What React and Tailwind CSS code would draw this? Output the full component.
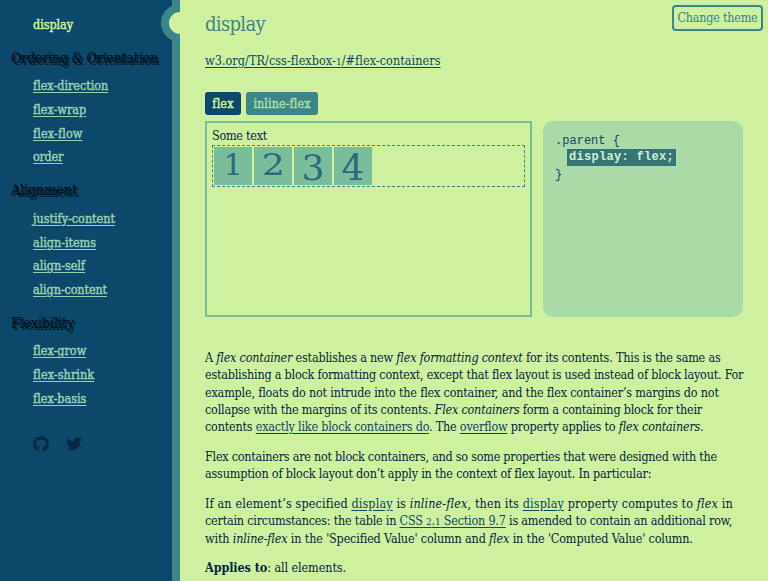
import { useLayoutEffect, useRef, useState } from 'react';
import { FaGithub, FaTwitter } from 'react-icons/fa';

// One line of text, tracked so that it fills the given measure.
function Fit({ w, className = '', children }) {
  const ref = useRef(null);
  const [spacing, setSpacing] = useState(0);
  useLayoutEffect(() => {
    const el = ref.current;
    setSpacing((w - el.getBoundingClientRect().width) / el.textContent.length);
  }, [w]);
  return (
    <span ref={ref} className={`inline-block whitespace-nowrap ${className}`} style={{ letterSpacing: spacing }}>
      {children}
    </span>
  );
}

const groups = [
  { title: 'Ordering & Orientation', w: 147, items: [['flex-direction', 75], ['flex-wrap', 53], ['flex-flow', 49], ['order', 30]] },
  { title: 'Alignment', w: 66, items: [['justify-content', 82], ['align-items', 63], ['align-self', 52], ['align-content', 74]] },
  { title: 'Flexibility', w: 63, items: [['flex-grow', 53], ['flex-shrink', 61], ['flex-basis', 53]] },
];

function Sidebar() {
  return (
    <nav className="relative flex h-full w-[180px] shrink-0 overflow-hidden bg-[#0b486b]">
      <div className="w-[172px] shrink-0 pt-[12.5px]">
        <div className="flex h-6 items-center pl-[33px] text-[#cff09e] [-webkit-text-stroke:0.45px]">
          <Fit w={40}>display</Fit>
        </div>
        {groups.map((g) => (
          <div key={g.title} className="pt-[8px]">
            <div className="mb-[1.7px] flex h-[28px] items-center pl-[11px] text-[14px] text-[#020d16] [text-shadow:2px_2px_0_#031a28]">
              <Fit w={g.w}>{g.title}</Fit>
            </div>
            {g.items.map(([t, w]) => (
              <a key={t} className="flex h-[23.7px] items-center pl-[33px] text-[#95cfb0] [-webkit-text-stroke:0.45px]">
                <Fit w={w} className="underline underline-offset-2">{t}</Fit>
              </a>
            ))}
          </div>
        ))}
        <div className="flex gap-[17px] pl-[33px] pt-[26px] text-[#062a40]">
          <FaGithub size={16} />
          <FaTwitter size={16} />
        </div>
      </div>
      <div className="w-2 shrink-0 bg-[#3b8686]" />
      <div className="absolute -right-[19px] top-[4px] size-[38px] rounded-full border-8 border-[#3b8686] bg-[#cff09e]" />
    </nav>
  );
}

const A = ({ children }) => <a className="text-[#0b486b] underline underline-offset-2">{children}</a>;
const Low = ({ children }) => <span className="text-[0.8em]">{children}</span>;

const paragraphs = [
  [
    [515, <>A <i>flex container</i> establishes a new <i>flex formatting context</i> for its contents. This is the same as</>],
    [538, <>establishing a block formatting context, except that flex layout is used instead of block layout. For</>],
    [513, <>example, floats do not intrude into the flex container, and the flex container’s margins do not</>],
    [497, <>collapse with the margins of its contents. <i>Flex containers</i> form a containing block for their</>],
    [498, <>contents <A>exactly like block containers do</A>. The <A>overflow</A> property applies to <i>flex containers</i>.</>],
  ],
  [
    [512, <>Flex containers are not block containers, and so some properties that were designed with the</>],
    [446, <>assumption of block layout don’t apply in the context of flex layout. In particular:</>],
  ],
  [
    [527, <>If an element’s specified <A>display</A> is <i>inline-flex</i>, then its <A>display</A> property computes to <i>flex</i> in</>],
    [527, <>certain circumstances: the table in <A>CSS <Low>2</Low>.<Low>1</Low> Section 9.7</A> is amended to contain an additional row,</>],
    [487, <>with <i>inline-flex</i> in the 'Specified Value' column and <i>flex</i> in the 'Computed Value' column.</>],
  ],
  [[141, <><b>Applies to</b>: all elements.</>]],
];

const digits = [
  ['1', 'text-[29px] scale-x-105 -mt-[1px]'],
  ['2', 'text-[29px] scale-x-125 -mt-[1px]'],
  ['3', 'text-[36px] mt-[3px]'],
  ['4', 'text-[36px] mt-[3px]'],
];

function Demo() {
  return (
    <div className="flex gap-[11px]">
      <div className="h-[196px] w-[327px] border-2 border-[#79bd9a] px-[5px] pt-[4px]">
        <div className="mb-px flex h-[17px] items-center text-[#05293f]"><Fit w={55}>Some text</Fit></div>
        <div className="flex h-[42px] gap-[2px] border border-dashed border-[#3b8686] p-px">
          {digits.map(([d, c]) => (
            <div key={d} className="flex h-[38px] w-[38px] items-center justify-center bg-[#79bd9a] font-['DejaVu_Serif',serif] leading-none text-[#296a7d]">
              <span className={c}>{d}</span>
            </div>
          ))}
        </div>
      </div>
      <pre className="h-[196px] w-[200px] rounded-[10px] bg-[#a8dba8] px-3 pt-[11px] font-['Liberation_Mono',monospace] text-[12px] leading-[17px] text-[#0b486b]">
        <div className="h-[17px] pt-px"><Fit w={65}>{'.parent {'}</Fit></div>
        <div className="ml-[12px] h-[17px] w-[109px] bg-[#357576] pl-[2px] font-bold text-[#cff0d0]"><Fit w={105}>display: flex;</Fit></div>
        <div className="h-[17px] pt-px">{'}'}</div>
      </pre>
    </div>
  );
}

export default function App() {
  return (
    <div className="flex h-[581px] w-[768px] overflow-hidden bg-[#cff09e] font-['DejaVu_Serif_Condensed','DejaVu_Serif',serif] text-[12.5px] leading-[17.3px] text-[#05293f]">
      <Sidebar />
      <main className="flex-1 pl-[25px]">
        <header className="flex h-[48px] items-start justify-between pr-[5px] pt-[5px]">
          <h1 className="pt-[6px] text-[20px] leading-[26px] text-[#3b8686]"><Fit w={60}>display</Fit></h1>
          <button className="flex h-[26px] w-[91px] items-center justify-center rounded-[4px] border-2 border-[#3b8686] text-[#3b8686]">
            <Fit w={80}>Change theme</Fit>
          </button>
        </header>
        <div className="flex h-[26px] items-center">
          <A><Fit w={235} className="underline underline-offset-2">w3.org/TR/css-flexbox-<Low>1</Low>/#flex-containers</Fit></A>
        </div>
        <div className="mb-[6px] mt-[18px] flex gap-[5px] [-webkit-text-stroke:0.45px]">
          <div className="flex h-[23px] w-[36px] items-center justify-center rounded-[3px] bg-[#0b486b] text-[#cff09e]"><Fit w={21}>flex</Fit></div>
          <div className="flex h-[23px] w-[72px] items-center justify-center rounded-[3px] bg-[#3b8686] text-[#a8dba8]"><Fit w={57}>inline-flex</Fit></div>
        </div>
        <Demo />
        <article className="flex flex-col gap-[12.5px] pt-[32px]">
          {paragraphs.map((lines, i) => (
            <p key={i}>
              {lines.map(([w, text], j) => (
                <span key={j} className="block h-[17.3px]"><Fit w={w}>{text}</Fit></span>
              ))}
            </p>
          ))}
        </article>
      </main>
    </div>
  );
}
